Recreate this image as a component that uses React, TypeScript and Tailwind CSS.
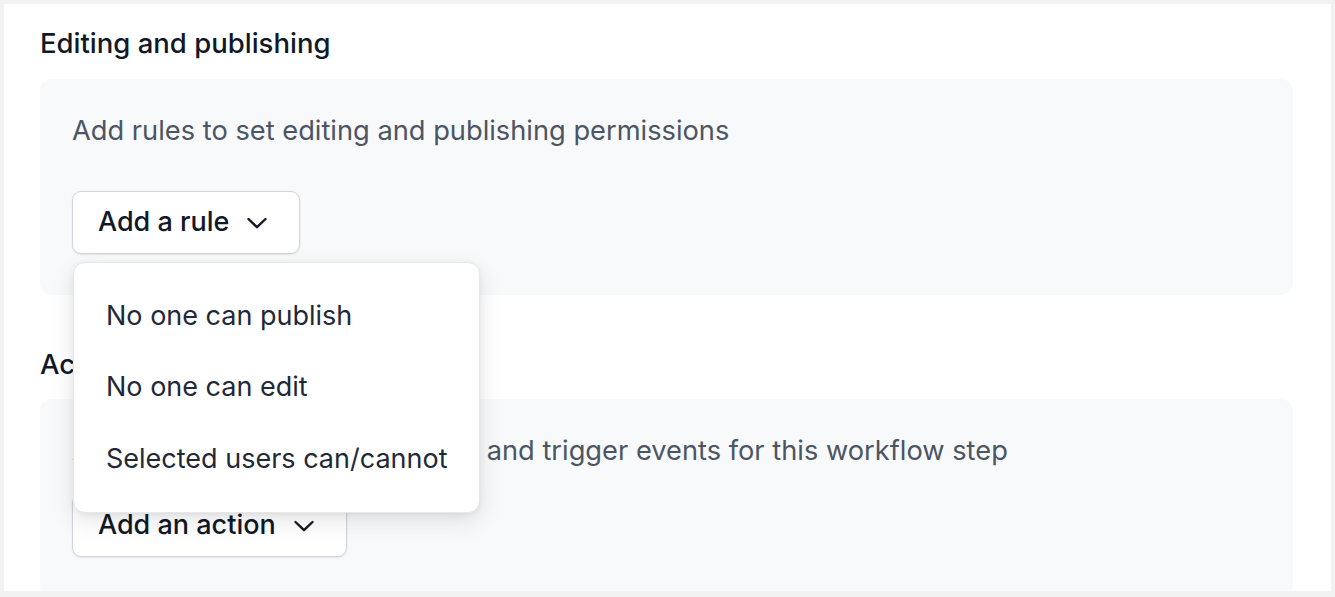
import React from "react";

function Chevron() {
  return (
    <svg width="24" height="14" viewBox="0 0 24 14" fill="none" stroke="currentColor" strokeWidth="2.4" strokeLinecap="round" strokeLinejoin="round">
      <path d="M3.5 3L12 11.2L20.5 3" />
    </svg>
  );
}

export default function App() {
  return (
    <div className="h-[597px] overflow-hidden bg-[#f2f2f2] p-[4px]" style={{ fontFamily: "Inter, 'Noto Sans', sans-serif" }}>
      <div className="h-[587px] bg-white pl-[36px] pr-[38px] pt-[21px] overflow-hidden">
        <h2 className="text-[27.5px] leading-[36px] font-medium text-[#111827]">Editing and publishing</h2>
        <div className="mt-[18px] rounded-[12px] bg-[#f8f9fa] pl-[32px] pt-[37px] pb-[41px]">
          <p className="text-[27.25px] leading-[30px] text-[#4b5563]">Add rules to set editing and publishing permissions</p>
          <div className="relative mt-[45px] w-fit">
            <button className="flex h-[63px] items-center gap-[16px] rounded-[9px] border border-[#d1d5db] bg-white pl-[25px] pr-[30px] text-[27px] font-medium text-[#111827] shadow-[0_1px_2px_rgba(0,0,0,0.08)]">
              Add a rule
              <Chevron />
            </button>
            <div className="absolute left-[1px] top-[71px] z-10 w-[407px] rounded-[12px] border border-[#e5e7eb] bg-white pt-[18px] pb-[17px] shadow-[0_8px_24px_rgba(0,0,0,0.10),0_2px_6px_rgba(0,0,0,0.06)]">
              <div className="flex h-[71px] items-center pl-[32px] text-[27px] text-[#1f2937]">No one can publish</div>
              <div className="flex h-[71px] items-center pl-[32px] text-[27px] text-[#1f2937]">No one can edit</div>
              <div className="flex h-[72px] items-center pl-[32px] text-[27px] text-[#1f2937]">Selected users can/cannot</div>
            </div>
          </div>
        </div>
        <h2 className="mt-[51px] text-[27.5px] leading-[36px] font-medium text-[#111827]">Actions</h2>
        <div className="mt-[17px] rounded-[12px] bg-[#f8f9fa] pl-[32px] pt-[37px] pb-[41px]">
          <p className="text-[27.25px] leading-[30px] text-[#4b5563]">Add actions to notify reviewers, and trigger events for this workflow step</p>
          <div className="relative mt-[28px] w-fit">
            <button className="flex h-[63px] items-center gap-[16px] rounded-[9px] border border-[#d1d5db] bg-white pl-[25px] pr-[30px] text-[27px] font-medium text-[#111827] shadow-[0_1px_2px_rgba(0,0,0,0.08)]">
              Add an action
              <Chevron />
            </button>
          </div>
        </div>
      </div>
    </div>
  );
}
